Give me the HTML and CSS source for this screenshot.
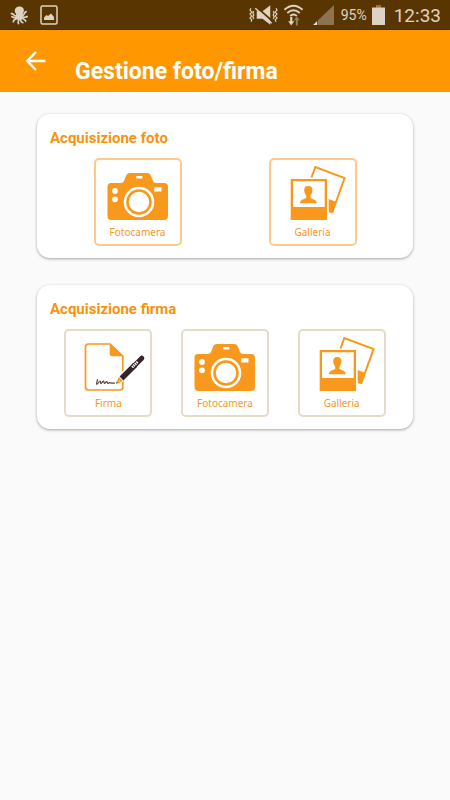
FILE: index.html
```html
<!DOCTYPE html>
<html lang="it">
<head>
<meta charset="utf-8">
<meta name="viewport" content="width=device-width, initial-scale=1">
<title>Gestione foto/firma</title>
<link rel="stylesheet" href="styles.css">
</head>
<body>
<svg class="symbols" aria-hidden="true">
  <symbol id="camera" viewBox="3 3 82 62">
    <path fill="#f8981d" d="M17 25h10q2 0 3-2l2-5q1-3 4-3h17q3 0 4 3l2 5q1 2 3 2h8q4 0 4 4v29q0 4-4 4H17.500q-4 0-4-4V29q0-4 3.500-4z"/>
    <circle cx="45" cy="44" r="15.300" fill="#fff"/>
    <circle cx="45" cy="44" r="11.500" fill="#fff" stroke="#f8981d" stroke-width="2.600"/>
    <circle cx="21" cy="33" r="2.900" fill="#fff"/>
    <circle cx="21" cy="41.300" r="2.900" fill="#fff"/>
    <path fill="#fff" d="M60.200 29.200h7.300v4.400h-7.300zM42.200 18h6.200v2.400h-6.200z"/>
  </symbol>
  <symbol id="gallery" viewBox="3 3 82 62">
    <path fill="none" stroke="#f8981d" stroke-width="2" d="M42.500 19.500 46.300 9l29.300 11-12.400 34.500"/>
    <path fill="#f8981d" d="m59.700 41 7.300 2.700-3.700 11.600-3.600-1.300z"/>
    <path fill="#f8981d" fill-rule="evenodd" d="M21.700 21H58v41H21.700zM24 23.300V49h31.700V23.300z"/>
    <path fill="#f8981d" d="M39.300 28c3 0 4.300 2 4.100 4.500-.2 2.300-.9 4-1.900 5v2.300c.7 1.400 6.200 1.200 6.200 5.500H31c0-4.300 5.500-4.100 6.200-5.500v-2.300c-1-1-1.800-2.700-2-5C35 30 36.300 28 39.300 28z"/>
  </symbol>
  <symbol id="sign" viewBox="3 3 82 62">
    <path fill="none" stroke="#f8981d" stroke-width="1.700" d="M46 15H24.500q-3 0-3 3v40q0 3 3 3h31.300q3 0 3-3V27z"/>
    <path fill="#f8981d" d="M45.700 14.200 59.200 27.300H48.500q-2.800 0-2.800-2.800z"/>
    <path fill="none" stroke="#55413c" stroke-width="1.200" stroke-linecap="round" stroke-linejoin="round" d="M33.500 50.500c-.3 2-1.500 4.500-.7 4.800 1 .2 2.200-3.400 3.400-3.300.9.200.2 2.700.8 2.700.8 0 1.500-2.600 2.500-2.500.8.200.3 2.200.9 2.300.9 0 1.400-2 2.300-1.800.8.200.5 1.800 1.300 1.800.7 0 1.200-1 2-.8.9.2 1.600.8 4.500.4"/>
    <path stroke="#fff" stroke-width="7.500" d="m55 51 14-14"/>
    <path fill="#f8981d" d="m54.800 48 4 4-5.300 2.400-1-1z"/>
    <path fill="#fff" d="m55.300 51.200.8.800-1.500.7z"/>
    <path stroke="#35232b" stroke-width="5.500" d="M57.500 49.500 71 36"/>
    <path stroke="#35232b" stroke-width="5" stroke-linecap="round" d="m70 37 7.800-7.800"/>
    <path stroke="#fff" stroke-width="2.400" stroke-dasharray="1.400 .7" d="m68.200 38.300 5.800-5.800"/>
    <circle cx="52.700" cy="53.900" r=".7" fill="#35232b"/>
  </symbol>
</svg>

<div class="status">
  <div class="status-group">
    <svg class="octopus" viewBox="0 0 20 20" aria-hidden="true">
      <path fill="#ddd3c4" d="M10 1c3.300 0 4.900 2.300 4.600 4.800C14.400 7.500 13 8.500 13.300 10c1.200 1 .5 5.500-3.300 5.500S5.300 11.500 6.500 10c0-1.500-1.500-2.500-1.500-4.500C5 3 7 1 10 1z"/>
      <path fill="none" stroke="#ddd3c4" stroke-width="1.800" stroke-linecap="round" d="M7.500 11C4 12 4 8 1.500 8.500M8 12.500c-3 1.500-4.500 0-6-.8M8 13c-1 2-4.500 1.200-4.500 4M9.500 13.500c0 3-2 3.500-.5 5.500M11 13.500c0 2.500 0 4.500 2.500 4.500M12 12.500c1 2 4 1.500 4.500 4M12 11.500c3 1.500 4.500 1 6 0M12.500 10.500c3 .5 2-3.500 4.500-4"/>
    </svg>
    <svg class="picture" viewBox="0 0 18 20" aria-hidden="true">
      <rect x="1" y="1" width="16" height="18" rx="1.500" fill="none" stroke="#ddd3c4" stroke-width="1.500"/>
      <path fill="#ddd3c4" d="M4 15v-2.500l2.500-2.500L8 11l3-2.500 3 3.500v3z"/>
    </svg>
  </div>
  <div class="status-group right">
    <svg class="mute" viewBox="0 0 30 22" aria-hidden="true">
      <path fill="#ddd3c4" d="M8 7h6l8-6v20l-8-6H8z"/>
      <path stroke="#593502" stroke-width="1.800" d="M7.500 2.500 25 18"/>
      <path stroke="#ddd3c4" stroke-width="1.600" d="M6.500 4 23.500 19.500"/>
      <path fill="none" stroke="#ddd3c4" stroke-width="1.200" d="m2 4-1 2 2 2-2 2 2 2-2 2 2 2-1 2M5 7 4 9l1 2-1 2 1 2M28 4l1 2-2 2 2 2-2 2 2 2-2 2 1 2M25 7l1 2-1 2 1 2-1 2"/>
    </svg>
    <svg class="wifi" viewBox="0 0 22 24" aria-hidden="true">
      <path fill="none" stroke="#ddd3c4" stroke-width="2" d="M1.500 6.500Q11-2 20.500 6.500M4.500 9.800q6.500-5.500 13 0M7.500 13q3.500-3 7 0"/>
      <path fill="#ddd3c4" d="M7.500 14h2.300v4.500h2L8.600 23l-3.200-4.500h2.100z"/>
      <path fill="#95815f" d="M13.500 23V17.500h-2l3-4 3 4h-2V23z"/>
    </svg>
    <svg class="signal" viewBox="0 0 21 20" aria-hidden="true">
      <path fill="#8d744e" d="M21 0v20H5V15.200z"/>
      <path fill="#e6ded0" d="M4.200 16V20H0z"/>
    </svg>
    <span class="percent">95%</span>
    <svg class="battery" viewBox="0 0 13 20" aria-hidden="true">
      <path fill="#8d744e" d="M4 0h5v3H4z"/>
      <path fill="#ddd3c4" d="M0 2.500h13V20H0z"/>
    </svg>
    <span class="clock">12:33</span>
  </div>
</div>

<header class="appbar">
  <button class="back" type="button" aria-label="Indietro">
    <svg viewBox="0 0 20 20" aria-hidden="true"><path fill="none" stroke="#fff" stroke-width="2.500" d="M10.500 1 1.800 10l8.700 9M2 10h18"/></svg>
  </button>
  <h1>Gestione foto/firma</h1>
</header>

<main>
  <section class="card">
    <h2>Acquisizione foto</h2>
    <div class="tiles">
      <button class="tile" type="button"><svg aria-hidden="true"><use href="#camera"/></svg><span>Fotocamera</span></button>
      <button class="tile" type="button"><svg aria-hidden="true"><use href="#gallery"/></svg><span>Galleria</span></button>
    </div>
  </section>
  <section class="card sand">
    <h2>Acquisizione firma</h2>
    <div class="tiles">
      <button class="tile" type="button"><svg aria-hidden="true"><use href="#sign"/></svg><span>Firma</span></button>
      <button class="tile" type="button"><svg aria-hidden="true"><use href="#camera"/></svg><span>Fotocamera</span></button>
      <button class="tile" type="button"><svg aria-hidden="true"><use href="#gallery"/></svg><span>Galleria</span></button>
    </div>
  </section>
</main>
</body>
</html>
```
FILE: styles.css
```css
* {
  box-sizing: border-box;
}

body {
  margin: 0;
  background: #fafafa;
  font-family: Roboto, "Liberation Sans", sans-serif;
}

h1,
h2 {
  margin: 0;
  font-weight: 700;
}

button {
  padding: 0;
  font: inherit;
}

.symbols {
  display: none;
}

.status {
  display: flex;
  justify-content: space-between;
  height: 30px;
  padding: 1px 9px 0 10px;
  background: #593502;
  border-bottom: 1px solid #4a2b00;
  color: #ddd3c4;
}

.status-group {
  display: flex;
  align-items: center;
  gap: 11px;
}

.right {
  gap: 5px;
}

.octopus {
  width: 19px;
  height: 20px;
}

.picture {
  width: 18px;
  height: 20px;
}

.mute {
  width: 29px;
  height: 22px;
}

.wifi {
  width: 21px;
  height: 24px;
}

.signal {
  width: 21px;
  height: 20px;
  margin-left: 4px;
}

.percent {
  margin-left: 2px;
  font-size: 14px;
}

.battery {
  width: 13px;
  height: 20px;
}

.clock {
  margin-left: 4px;
  font-size: 19px;
}

.appbar {
  display: flex;
  gap: 29px;
  height: 62px;
  padding: 0 25px;
  background: #ff9800;
  color: #fff;
}

.back {
  width: 21px;
  height: 62px;
  border: 0;
  background: none;
}

.back svg {
  display: block;
  width: 21px;
  height: 20px;
}

h1 {
  padding-top: 28px;
  font-size: 23px;
  line-height: 28px;
}

main {
  display: grid;
  gap: 27px;
  padding: 22px 37px;
}

.card {
  padding: 15px 13px 12px;
  border-radius: 13px;
  background: #fff;
  box-shadow: 0 1px 3px rgba(0, 0, 0, 0.35);
}

h2 {
  margin-bottom: 11px;
  color: #f7930d;
  font-size: 15px;
  line-height: 18px;
}

.tiles {
  display: flex;
  justify-content: space-around;
}

.tile {
  display: flex;
  flex-direction: column;
  align-items: center;
  width: 88px;
  height: 88px;
  border: 2px solid #fdca87;
  border-radius: 5px;
  background: #fff;
  color: #f8981d;
  font-family: "Noto Sans", "Open Sans", sans-serif;
  font-size: 10px;
  line-height: 14px;
}

.tile svg {
  flex: none;
  width: 82px;
  height: 62px;
  margin-top: 1px;
}

.tile span {
  margin-top: 2px;
}

.sand .tile {
  border-color: #e6dac8;
}
```
